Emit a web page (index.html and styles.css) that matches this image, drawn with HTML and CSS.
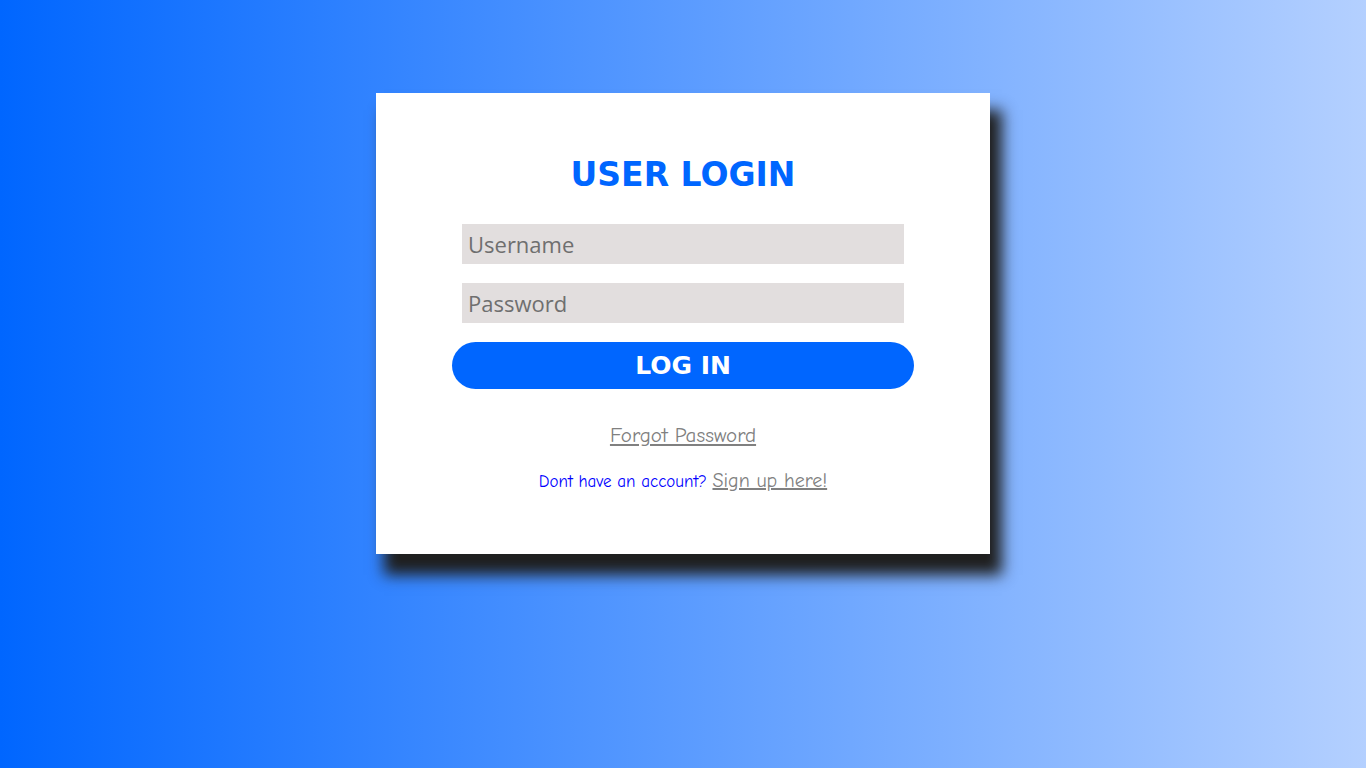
FILE: index.html
```html
<!DOCTYPE html>
<html>
<head>
<meta charset="utf-8">
<link rel="stylesheet" href="styles.css">
</head>
<body>
<div class="page">
  <form class="card">
    <h1 class="title">USER LOGIN</h1>
    <input class="field" type="text" placeholder="Username">
    <input class="field" type="password" placeholder="Password">
    <button class="btn" type="button">LOG IN</button>
    <a class="forgot" href="#">Forgot Password</a>
    <p class="signup">Dont have an account? <a class="signup-link" href="#">Sign up here!</a></p>
  </form>
</div>
</body>
</html>
```
FILE: styles.css
```css
html, body {
  margin: 0;
  padding: 0;
  height: 100%;
}
body {
  background: linear-gradient(to right, #0066ff 0%, #b4d0ff 100%);
  font-family: "DejaVu Sans", Verdana, sans-serif;
}
.page {
  display: flex;
  justify-content: center;
  padding-top: 93px;
}
.card {
  width: 614px;
  height: 461px;
  box-sizing: border-box;
  background: #fff;
  box-shadow: 10px 19px 14px 2px #1f1f1f;
  display: flex;
  flex-direction: column;
  align-items: center;
  padding-top: 58px;
}
.title {
  margin: 0 0 25px 0;
  font-family: "DejaVu Sans", Verdana, sans-serif;
  font-weight: bold;
  font-size: 33px;
  line-height: 48px;
  color: #0066ff;
}
.field {
  width: 442px;
  height: 40px;
  box-sizing: border-box;
  border: none;
  outline: none;
  background: #e2dede;
  padding: 0 6px;
  margin: 0 0 19px 0;
  font-family: "Open Sans", sans-serif;
  font-size: 22px;
  color: #333;
}
.field::placeholder {
  color: #6f6f6f;
}
.btn {
  width: 462px;
  height: 47px;
  border: none;
  border-radius: 24px;
  background: #0066ff;
  color: #fff;
  font-family: "DejaVu Sans", Verdana, sans-serif;
  font-weight: bold;
  font-size: 25px;
  padding: 0;
  margin: 0 0 34px 0;
  cursor: pointer;
}
.forgot {
  font-family: "Comic Neue", "Comic Sans MS", "DejaVu Sans", sans-serif;
  font-size: 21px;
  color: #808080;
  line-height: 24px;
  text-decoration: underline;
}
.signup {
  margin: 22px 0 0 0;
  font-family: "Comic Neue", "Comic Sans MS", "DejaVu Sans", sans-serif;
  font-size: 17px;
  color: #0000ff;
  line-height: 24px;
}
.signup-link {
  font-size: 20px;
  color: #808080;
}
```
